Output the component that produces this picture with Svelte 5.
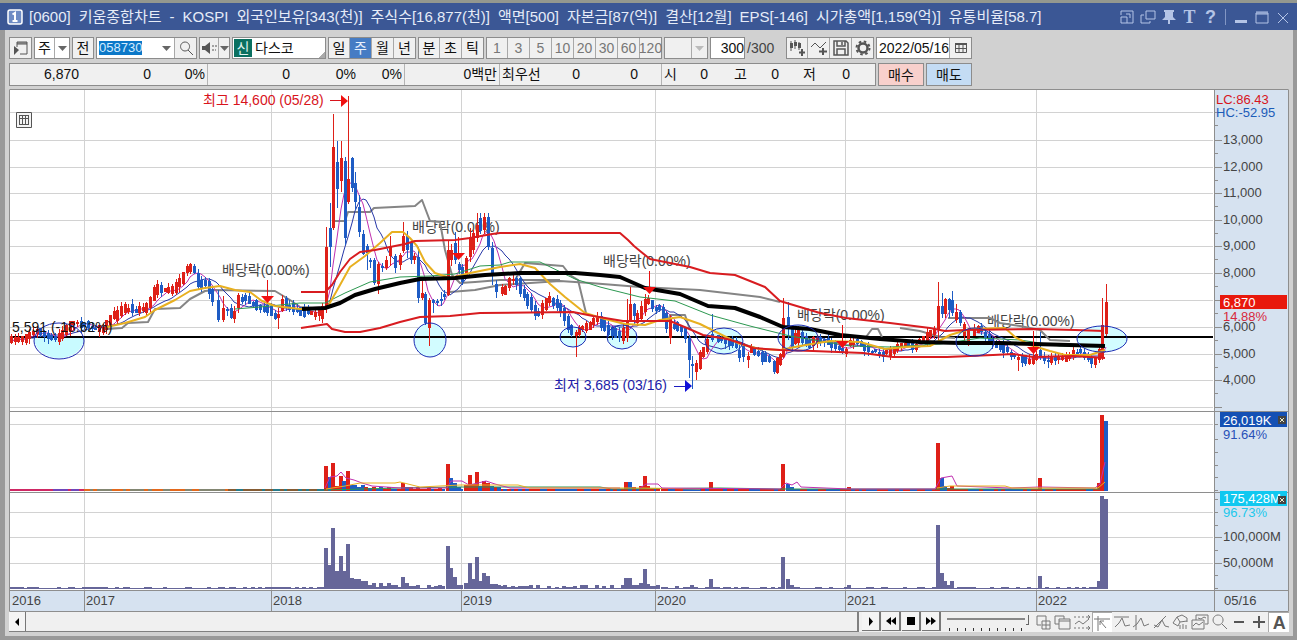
<script lang="ts">
  // Weekly stock chart window: title bar, period toolbar, quote strip,
  // three stacked panes (price / volume / turnover) and the replay bar.

  type Candle = { x: number; high: number; low: number; top: number; bottom: number; up: boolean };

  const title = [
    "[0600]",
    "키움종합차트",
    "-",
    "KOSPI",
    "외국인보유[343(천)]",
    "주식수[16,877(천)]",
    "액면[500]",
    "자본금[87(억)]",
    "결산[12월]",
    "EPS[-146]",
    "시가총액[1,159(억)]",
    "유통비율[58.7]",
  ];

  const periods = ["일", "주", "월", "년"];
  const intraday = ["분", "초", "틱"];
  const minutes = [1, 3, 5, 10, 20, 30, 60, 120];
  let period = $state("주");
  let code = $state("058730");
  let count = $state("300");
  let date = $state("2022/05/16");
  let speed = $state(100);

  const priceGrid = [112, 140, 167, 193, 220, 246, 273, 300, 327, 354, 380, 407];
  const priceLabels = ["13,000", "12,000", "11,000", "10,000", "9,000", "8,000", "7,000", "6,000", "5,000", "4,000"];
  const years = [
    { x: 10, label: "2016" },
    { x: 84, label: "2017" },
    { x: 271, label: "2018" },
    { x: 461, label: "2019" },
    { x: 655, label: "2020" },
    { x: 845, label: "2021" },
    { x: 1036, label: "2022" },
  ];

  // Middle of the weekly range in the quiet stretches, as x, y pairs.
  const mids = pairs(
    "11 341 16 339 25 338 30 334 40 331 50 338 57 339 65 332 72 323 80 323 88 326 95 328 103 329 107 325 111 318 118 314 125 309 131 309 138 310 146 308 152 301 156 288 162 291 170 292 177 287 183 277 189 267 195 272 200 283 207 283 213 296 218 308 222 312 228 310 234 314 239 298 247 299 254 303 262 308 270 309 277 318 283 302 290 307 297 309 303 311 310 313 316 314 322 311 326 300 495 290 502 292 506 290 510 281 517 281 521 290 527 299 533 307 538 313 543 309 547 301 555 301 560 308 565 317 569 326 573 336 580 329 587 328 592 323 598 317 603 325 610 330 616 333 622 336 627 325 637 319 643 308 648 300 655 308 661 308 665 318 669 325 674 326 680 329 686 334 702 352 705 350 709 338 718 338 725 340 731 342 737 345 745 355 752 350 758 354 765 358 770 361 774 366 780 360 797 335 802 335 808 343 815 340 822 340 830 344 838 348 845 352 851 343 855 342 862 345 868 350 875 351 882 353 890 353 897 347 905 345 915 347 922 340 928 334 935 332 956 312 960 319 964 331 968 338 972 335 976 328 982 331 988 337 994 343 1000 347 1007 351 1013 356 1022 358 1029 361 1036 357 1044 360 1055 358 1062 359 1070 356 1075 352 1080 352 1086 358 1094 361 1099 355 1106 318",
  );

  // Weeks that stand out: x, high, low, body top, body bottom, 1 = up.
  const marked: Candle[] = [
    [218, 290, 322, 300, 320, 0], [223, 296, 322, 308, 320, 1], [278, 308, 329, 314, 318, 1],
    [326, 227, 313, 247, 307, 1], [330, 203, 267, 228, 247, 0], [333, 114, 230, 147, 228, 1],
    [337, 141, 208, 162, 189, 0], [341, 141, 192, 158, 181, 1], [345, 157, 245, 161, 238, 0],
    [348, 96, 204, 179, 202, 1], [352, 157, 192, 158, 188, 0], [355, 172, 210, 183, 202, 0],
    [359, 195, 237, 207, 232, 0], [363, 230, 255, 234, 254, 0], [367, 244, 270, 246, 253, 0],
    [370, 258, 268, 260, 262, 0], [374, 258, 285, 260, 283, 0], [378, 262, 294, 264, 284, 1],
    [382, 263, 272, 266, 268, 0], [386, 256, 270, 260, 268, 1], [390, 236, 266, 246, 256, 1],
    [395, 254, 273, 256, 268, 0], [400, 253, 270, 255, 265, 1], [403, 222, 253, 236, 251, 1],
    [407, 231, 258, 236, 250, 0], [411, 240, 264, 242, 260, 0], [414, 253, 264, 256, 260, 1],
    [418, 247, 303, 257, 298, 0], [422, 281, 300, 293, 298, 1], [425, 292, 325, 294, 323, 0],
    [429, 298, 346, 300, 328, 1], [433, 299, 313, 300, 303, 0], [437, 299, 306, 301, 303, 0],
    [441, 292, 306, 299, 301, 0], [444, 290, 300, 294, 297, 0], [448, 240, 296, 250, 295, 1],
    [451, 244, 266, 250, 260, 1], [455, 232, 264, 243, 260, 0], [459, 262, 274, 264, 270, 0],
    [462, 264, 285, 267, 282, 0], [466, 256, 278, 258, 277, 1], [470, 228, 262, 237, 257, 1],
    [473, 230, 254, 233, 250, 1], [477, 213, 242, 225, 238, 1], [480, 213, 234, 218, 231, 0],
    [484, 213, 234, 217, 230, 1], [488, 213, 250, 217, 247, 0], [492, 242, 285, 248, 275, 0],
    [496, 280, 298, 284, 292, 0], [576, 330, 357, 332, 336, 1], [627, 299, 342, 322, 338, 1],
    [630, 287, 322, 304, 320, 1], [634, 303, 325, 304, 316, 0], [645, 294, 316, 299, 312, 1],
    [670, 315, 344, 318, 338, 1], [689, 335, 378, 338, 360, 0], [692, 356, 389, 364, 366, 0],
    [696, 360, 380, 363, 372, 1], [700, 350, 370, 352, 369, 1], [712, 314, 342, 334, 340, 0],
    [739, 345, 362, 350, 358, 0], [748, 352, 368, 356, 360, 1], [774, 360, 374, 361, 372, 0],
    [777, 357, 374, 358, 373, 1], [783, 298, 358, 318, 357, 1], [788, 302, 340, 317, 327, 0],
    [792, 326, 350, 328, 348, 0], [798, 326, 348, 328, 343, 1], [802, 330, 345, 332, 343, 0],
    [938, 282, 340, 306, 330, 1], [942, 293, 318, 306, 314, 0], [945, 298, 318, 299, 314, 1],
    [949, 298, 318, 299, 310, 0], [952, 291, 316, 300, 313, 0], [956, 304, 323, 312, 320, 1],
    [960, 310, 326, 312, 323, 0], [964, 322, 342, 324, 336, 1], [968, 328, 346, 331, 344, 1],
    [1018, 354, 371, 357, 360, 1], [1040, 332, 360, 350, 358, 0], [1048, 355, 368, 360, 362, 0],
    [1102, 298, 360, 325, 357, 1], [1106, 284, 336, 302, 334, 1],
  ].map(([x, high, low, top, bottom, up]) => ({ x, high, low, top, bottom, up: up === 1 }));

  function pairs(text: string): number[][] {
    const n = text.split(" ").map(Number);
    return n.flatMap((v, i) => (i % 2 ? [] : [[v, n[i + 1]]]));
  }

  function midAt(x: number): number {
    const i = mids.findIndex(([px]) => px >= x);
    if (i <= 0) return mids[i === 0 ? 0 : mids.length - 1][1];
    const [x0, y0] = mids[i - 1];
    const [x1, y1] = mids[i];
    return y0 + ((y1 - y0) * (x - x0)) / (x1 - x0);
  }

  // Small repeatable generator so the filler weeks never change.
  let seed = 7;
  function rand(): number {
    seed = (seed * 16807) % 2147483647;
    return seed / 2147483647;
  }

  const weeks = Array.from({ length: 300 }, (_, i) => Math.round(11 + i * 3.662));

  function near(x: number): Candle | undefined {
    return marked.find((c) => Math.abs(c.x - x) < 2.1);
  }

  const filler: Candle[] = weeks
    .filter((x) => !near(x) && !(x > 324 && x < 494))
    .map((x) => {
      const calm = x < 105 || x > 830;
      const slope = midAt(x + 3) - midAt(x - 3);
      const y = midAt(x) + (rand() - 0.5) * 3;
      const half = (calm ? 0.5 : 1) + rand() * 3 + Math.min(Math.abs(slope) / 3, 4);
      return {
        x,
        high: Math.round(y - half - rand() * 5),
        low: Math.round(y + half + rand() * 5),
        top: Math.round(y - half),
        bottom: Math.round(y + half),
        up: slope + (rand() - 0.5) * 4 < 0,
      };
    });
  const candles = [...filler, ...marked];

  function average(span: number): string {
    const ys = weeks.map((x) => {
      const c = near(x);
      return c ? (c.top + c.bottom) / 2 : midAt(x);
    });
    return weeks
      .map((x, i) => {
        const part = ys.slice(Math.max(0, i - span + 1), i + 1);
        return `${x},${Math.round(part.reduce((a, b) => a + b, 0) / part.length)}`;
      })
      .join(" ");
  }

  const backLines = [
    { cls: "gray", points: "107 329 122 328 128 323 148 322 155 309 180 308 190 299 205 291 215 290 275 291 290 300 300 307 325 309" },
    { cls: "gray", points: "335 221 345 221 348 212 370 212 374 208 415 206 422 200 430 221 440 222 445 250 452 275 460 283 475 282 500 280 560 280" },
    { cls: "gray", points: "450 292 475 290 500 285 560 281 590 283 640 287 700 290 760 297 780 302" },
    { cls: "gray", points: "515 280 525 263 563 266 570 275 578 280 586 313" },
    { cls: "gray", points: "668 322 670 315 685 315 690 330" },
    { cls: "gray", points: "866 337 872 329 878 329 882 337" },
    { cls: "gray", points: "900 328 920 331 940 337 955 338" },
    { cls: "gray", points: "948 318 990 318 1000 323 1020 326 1040 330 1050 340 1070 341" },
  ];
  const frontLines = [
    { cls: "green", points: "235 309 260 307 300 303 325 303 345 293 370 282 400 277 430 276 455 274 480 266 500 265 510 262 540 262 575 279 600 287 640 297 675 301 710 315 750 326 790 336 850 346 890 347 940 344 980 338 1020 340 1060 346 1105 346" },
    { cls: "gold", points: "107 327 125 323 145 317 155 310 175 300 190 291 205 288 220 286 235 290 250 292 262 301 275 306 300 309 327 308 340 285 350 267 365 256 380 243 392 232 403 232 410 238 417 246 425 262 435 273 450 278 470 273 500 267 520 264 535 268 550 284 565 297 585 313 605 319 625 324 645 325 660 320 680 317 700 324 720 334 740 344 760 349 780 350 800 346 830 341 860 342 885 349 905 347 930 346 950 335 970 329 1005 328 1015 337 1030 345 1050 351 1065 355 1090 355 1105 350" },
    { cls: "black", points: "302 309 325 308 340 303 355 295 375 289 400 283 420 279 455 278 485 275 520 273 575 273 600 275 620 277 645 288 680 294 708 306 735 308 760 317 783 327 810 329 840 335 880 339 920 342 960 343 1000 343 1105 346" },
    { cls: "red", points: "301 292 325 292 332 285 340 272 350 259 360 252 375 250 390 247 405 244 415 241 455 240 470 238 492 234 500 233 620 233 628 240 634 246 640 251 650 259 665 262 690 267 710 273 735 275 750 281 765 287 780 301 800 307 820 313 846 318 890 323 930 328 945 331 965 330 1035 329 1075 330 1104 331" },
    { cls: "red", points: "301 328 327 324 332 329 345 332 360 332 380 328 400 322 420 317 450 316 480 313 573 312 593 316 623 321 670 321 687 328 703 335 727 339 740 343 753 348 780 350 813 351 863 353 893 357 947 357 993 355 1013 354 1033 357 1073 356 1105 358" },
  ];

  const rings = [
    [430, 340, 16, 17], [573, 337, 13, 10], [622, 337, 15, 12], [724, 341, 19, 13],
    [798, 338, 20, 13], [975, 342, 19, 14], [1102, 339, 25, 13],
  ];

  const dividends = [
    { x: 222, y: 275, arrow: 267 },
    { x: 412, y: 232, arrow: 458 },
    { x: 603, y: 266, arrow: 649 },
    { x: 797, y: 320, arrow: 842 },
    { x: 987, y: 326, arrow: 1033 },
  ];

  // Busy weeks: x, turnover top, volume top, 1 = up.
  const busy = [
    [326, 548, 466, 1], [330, 565, 477, 0], [333, 528, 463, 1], [337, 571, 486, 1], [341, 556, 476, 1],
    [344, 571, 481, 0], [348, 544, 471, 1], [352, 578, 485, 0], [355, 579, 485, 0], [359, 579, 487, 0],
    [363, 581, 485, 0], [366, 581, 487, 1], [370, 585, 488, 0], [374, 583, 487, 1], [381, 583, 487, 0],
    [389, 583, 487, 1], [403, 577, 483, 1], [407, 583, 487, 0], [411, 586, 487, 1], [418, 585, 487, 1],
    [429, 585, 488, 1], [440, 585, 488, 1], [448, 546, 464, 1], [451, 568, 478, 0], [455, 577, 483, 0],
    [459, 585, 487, 0], [466, 583, 485, 1], [470, 563, 475, 1], [473, 579, 484, 1], [477, 557, 472, 1],
    [480, 581, 486, 0], [484, 573, 481, 1], [488, 576, 483, 1], [492, 584, 486, 0], [496, 584, 487, 1],
    [499, 585, 487, 0], [626, 578, 482, 1], [630, 578, 482, 0], [634, 585, 487, 1], [641, 583, 486, 1],
    [645, 569, 476, 1], [648, 584, 486, 1], [658, 585, 488, 1], [711, 579, 482, 1], [783, 557, 464, 1],
    [788, 579, 484, 0], [792, 585, 487, 0], [849, 585, 487, 1], [938, 525, 443, 1], [942, 573, 478, 0],
    [945, 581, 486, 0], [949, 585, 488, 1], [952, 581, 486, 1], [1040, 576, 478, 1], [1099, 581, 483, 1],
    [1102, 496, 415, 1], [1106, 499, 421, 0],
  ];
  const quiet = weeks
    .filter((x) => !busy.some((b) => Math.abs(b[0] - x) < 2))
    .map((x) => [x, 588 - Math.floor(rand() * (x > 325 && x < 700 ? 4 : 2)), 489, rand() > 0.5 ? 1 : 0]);
  const bars = [...quiet, ...busy];

  const volumeLines = [
    { cls: "magenta", points: "10 490 84 490" },
    { cls: "gold", points: "84 490 228 490" },
    { cls: "green", points: "228 490 325 490 400 488 460 487 600 487 612 489 720 488 780 489 930 489 1100 489" },
    { cls: "magenta", points: "325 488 330 477 337 476 341 472 346 478 354 480 362 483 372 486 400 488 447 488 451 481 462 481 469 485 478 483 486 481 495 484 510 488 620 488" },
    { cls: "gold", points: "326 489 345 486 360 483 395 483 400 482 408 484 420 487 460 485 518 485 530 488 640 488 700 489" },
    { cls: "magenta", points: "640 488 646 484 658 484 662 488 780 489 786 483 792 485 797 482 801 487 850 489 935 489 941 478 952 476 957 486 1010 488 1040 487 1095 488 1100 484 1105 462" },
    { cls: "gold", points: "937 488 950 486 1005 486 1012 488 1098 488 1105 482" },
  ];

  const tools = [
    { name: "십자선 추가", d: "M3 3h9v5M3 3v9h4M8 8h8v8H8zM12 8v8M8 12h8" },
    { name: "창 복사", d: "M2 3h9v3M2 3v8h4M6 6h11v10H6zM6 8h11" },
    { name: "구간 표시", d: "M1 4h2m2 0h2m2 0h2m2 0h4M1 15h2m2 0h2m2 0h2m2 0h4M2 11l4-3 4 3 6-5M15 2l2 2-2 2M15 13l2 2-2 2" },
    { name: "기준선", d: "M1 5h16M5 2v15M7 7l6 7M7 11V7h4" },
    { name: "수평선", d: "M1 4h15M2 14l4-4 3-5 3 8 5-1" },
    { name: "수직선", d: "M4 2v15M1 14l4-3 4-6 3 8 5-2" },
    { name: "추세선", d: "M2 15L14 3M2 12l4 2 4-7 3 6 4 1" },
    { name: "도형", d: "M6 4l5-2 5 3v4M6 4L2 10l5 3 2-4zM9 9l7-1M9 12v4M12 11v5M15 12v4" },
    { name: "차트 겹치기", d: "M5 7V2h12v9h-3M7 5l3 1 3-2 2 1M1 7h12v9H1zM2 13l3-3 3 2 4-3" },
    { name: "돋보기", d: "M7 2a5 5 0 1 0 .1 0M11 11l5 5" },
    { name: "축소", d: "M4 9h10" },
    { name: "확대", d: "M3 9h12M9 3v12" },
  ];
</script>

{#snippet caret()}
  <svg class="caret" viewBox="0 0 9 5" width="9" height="5" aria-hidden="true"><path d="M0 0h9L4.5 5z" /></svg>
{/snippet}

<main class="window">
  <header class="titlebar">
    <svg viewBox="0 0 16 16" width="16" height="16" aria-hidden="true">
      <rect x="1" y="1" width="14" height="14" rx="2" fill="#6f8cc4" stroke="#fff" stroke-width="1.5" />
      <path d="M5.5 5.5L8 3.8V12M5.5 12h5" fill="none" stroke="#fff" stroke-width="2" />
    </svg>
    <h1>
      {#each title as part}<span>{part}</span>{/each}
    </h1>
    <div class="window-actions">
      <button type="button" aria-label="화면 크기">
        <svg viewBox="0 0 16 16"><path d="M2 6V2h12v12H8M2 8h6v6H2zM7 5h4v4" /></svg>
      </button>
      <button type="button" aria-label="화면 복사">
        <svg viewBox="0 0 16 16"><path d="M6 2h9v8H6zM4 6H1v8h9v-2" /></svg>
      </button>
      <button type="button" aria-label="고정">
        <svg viewBox="0 0 16 16"><path class="solid" d="M3 1h10v2h-1v5l3 3H1l3-3V3H3zM7 11h2v4H7z" /></svg>
      </button>
      <button type="button" class="serif">T</button>
      <button type="button" class="mark">?</button>
      <i></i>
      <button type="button" aria-label="최소화">
        <svg viewBox="0 0 16 16"><path stroke-width="2" d="M2 13h12M2 12h12" /></svg>
      </button>
      <button type="button" aria-label="최대화">
        <svg viewBox="0 0 16 16"><path d="M2 4h12v10H2zM2 5h12M2 3h12" /></svg>
      </button>
      <button type="button" aria-label="닫기">
        <svg viewBox="0 0 16 16"><path d="M3 4l10 10M13 4L3 14" /></svg>
      </button>
    </div>
  </header>

  <div class="body">
    <div class="toolbar">
      <button type="button" class="box first" aria-label="메뉴 열기">
        <svg viewBox="0 0 18 18" width="18" height="18"><path d="M5 8V3h10v12H8M5 4h10M5 5h10" /><path class="solid" d="M2 7l5 4-5 5z" /></svg>
      </button>
      <div class="group white kind">
        <select aria-label="종목 구분"><option>주</option></select>
        {@render caret()}
      </div>
      <button type="button" class="box">전</button>
      <div class="group">
        <div class="code"><input aria-label="종목코드" bind:value={code} /></div>
        <button type="button" class="drop" aria-label="종목 목록">{@render caret()}</button>
        <button type="button" aria-label="종목 검색">
          <svg viewBox="0 0 18 18" width="18" height="18"><path d="M8 3a4.5 4.5 0 1 0 .1 0M11 11l5 5" /></svg>
        </button>
      </div>
      <div class="group sound">
        <button type="button" aria-label="소리">
          <svg viewBox="0 0 18 18" width="18" height="18"><path class="solid" d="M2 7h3l5-4v12l-5-4H2z" /><path stroke-dasharray="2 1" d="M12 7h5M12 11h4" /></svg>
        </button>
        <button type="button" aria-label="소리 목록">{@render caret()}</button>
      </div>
      <div class="stock"><b>신</b><span>다스코</span></div>
      <div class="group">
        {#each periods as p}
          <button type="button" class:active={p === period} onclick={() => (period = p)}>{p}</button>
        {/each}
      </div>
      <div class="group">
        {#each intraday as p}<button type="button">{p}</button>{/each}
      </div>
      <div class="group dim">
        {#each minutes as m}<button type="button">{m}</button>{/each}
      </div>
      <div class="group dim blank">
        <select aria-label="분 단위"><option></option></select>
        {@render caret()}
      </div>
      <input class="count" aria-label="봉 개수" bind:value={count} />
      <span class="total">/300</span>
      <div class="group">
        <button type="button" aria-label="봉 추가">
          <svg viewBox="0 0 18 18" width="18" height="18"><path d="M3 2v10M7 1v9M11 3v8" /><path class="solid" d="M2 4h3v5H2zM6 3h3v4H6zM10 4h3v5h-3z" /><path stroke-width="2" d="M14 10v7M11 13.5h6" /></svg>
        </button>
        <button type="button" aria-label="지표 추가">
          <svg viewBox="0 0 18 18" width="18" height="18"><path d="M1 8l4-4 5 5 6-6" /><path stroke-width="2" d="M13 9v7M9 12.5h8" /></svg>
        </button>
        <button type="button" aria-label="저장">
          <svg viewBox="0 0 18 18" width="18" height="18"><path stroke-width="1.5" d="M2 2h12l2 2v12H2zM5 2v5h8V2M5 16v-6h8v6M10 3v3" /></svg>
        </button>
        <button type="button" aria-label="설정">
          <svg viewBox="0 0 18 18" width="18" height="18"><circle cx="9" cy="9" r="4.5" stroke-width="2.5" /><circle cx="9" cy="9" r="6.5" stroke-width="2" stroke-dasharray="2.55 2.55" /></svg>
        </button>
      </div>
      <div class="group">
        <input class="date" aria-label="기준일" bind:value={date} />
        <button type="button" aria-label="달력">
          <svg viewBox="0 0 18 18" width="18" height="18"><path d="M3.5 4.5h11v9h-11zM7 6v7M11 6v7M4 9.5h10" /><path stroke-width="2" d="M3 5h12" /></svg>
        </button>
      </div>
    </div>

    <div class="quote-row">
      <div class="quote">
        <span>6,870</span><span>0</span><span class="end">0%</span>
        <span>0</span><span>0%</span><span class="end">0%</span>
        <span class="end">0백만</span>
        <span class="name">최우선</span><span>0</span><span>0</span><span class="end"></span>
        <span class="name">시</span><span>0</span>
        <span>고</span><span>0</span>
        <span>저</span><span>0</span>
      </div>
      <button type="button" class="buy">매수</button>
      <button type="button" class="sell">매도</button>
    </div>

    <div class="chart">
      <button type="button" class="grid-button" aria-label="표 보기">
        <svg viewBox="0 0 16 16" width="16" height="16"><path d="M.5.5h15v15H.5zM3.5 3v10M6.5 3v10M9.5 3v10M12.5 3v10M3 3.5h10M3 6.5h10M3 12.5h10" /></svg>
      </button>
      <svg class="plot" viewBox="9 89 1280 523" role="img" aria-label="다스코 주봉 차트">
        <rect x="9" y="89" width="1280" height="523" fill="#fff" />
        <rect x="1214" y="90" width="74" height="501" class="pale" />
        <rect x="10" y="591" width="1278" height="20" class="pale" />

        <g class="grid">
          {#each [...priceGrid, 424, 512, 537, 563] as y}<path d="M10 {y}.5H1213" />{/each}
          {#each years.slice(1) as { x }}<path d="M{x}.5 90V591" />{/each}
        </g>

        <path d="M34 338a25 20 0 0 0 50 0z" fill="#c9fbff" />
        {#each rings as [cx, cy, rx, ry]}<ellipse {cx} {cy} {rx} {ry} fill="#d2fcff" />{/each}
        <path d="M10 337H1213" stroke="#000" stroke-width="2" />

        {#each dividends as { x, y }}<text {x} {y} class="note">배당락(0.00%)</text>{/each}

        {#each backLines as { cls, points }}<polyline class={cls} {points} />{/each}
        <polyline class="blue" points={average(10)} />
        <polyline class="magenta" points={average(5)} />

        <g shape-rendering="crispEdges">
          {#each candles as c}
            <g class={c.up ? "up" : "down"}>
              <rect x={c.x} y={c.high} width="1" height={c.low - c.high} />
              <rect x={c.x - 1} y={c.top} width="3" height={Math.max(c.bottom - c.top, 2)} />
            </g>
          {/each}
        </g>
        {#each frontLines as { cls, points }}<polyline class={cls} {points} />{/each}

        <ellipse cx="59" cy="341" rx="25" ry="18" class="ring" />
        {#each rings as [cx, cy, rx, ry]}<ellipse {cx} {cy} {rx} {ry} class="ring" />{/each}

        {#each dividends as { arrow, y }}
          <path d="M{arrow}.5 {y + 5}v18" stroke="#e81010" />
          <path d="M{arrow - 6} {y + 21}h13l-6.5 7z" fill="#f01010" />
        {/each}
        <text x="12" y="332" fill="#111">5,591 (-18.62%)</text>
        <text x="203" y="105" fill="#d8141c">최고 14,600 (05/28)</text>
        <path d="M330 100.5h12" stroke="#d8141c" />
        <path d="M341 95v12l7-6z" fill="#f01010" />
        <text x="554" y="390" fill="#1c1ca8">최저 3,685 (03/16)</text>
        <path d="M674 386.5h12" stroke="#1c1cc0" />
        <path d="M685 380v12l7-6z" fill="#1010d8" />

        <g shape-rendering="crispEdges">
          {#each bars as [x, amount, volume, up]}
            <rect x={x - 2} y={volume} width="4" height={491 - volume} class={up ? "up" : "down"} />
            <rect x={x - 2} y={amount} width="4" height={589 - amount} fill="#666699" />
          {/each}
        </g>
        {#each volumeLines as { cls, points }}
          <polyline class="{cls} slim" {points} />
        {/each}

        <g class="frame">
          <path d="M9.5 89.5H1288.5V611.5H9.5zM1214.5 90V611M10 411.5H1288M10 492.5H1288M10 590.5H1288" />
          {#each years.slice(1) as { x }}<path d="M{x}.5 591V611" />{/each}
          {#each [...priceGrid, 537, 563] as y}<path d="M1215 {y}.5h7" />{/each}
          {#each priceGrid.slice(0, -1) as y}<path d="M1215 {y + 13}.5h3" />{/each}
          {#each [424, 439, 452, 465, 477, 490, 499, 512, 525, 550, 575, 588] as y}<path d="M1215 {y}.5h3" />{/each}
        </g>

        <g class="axis">
          {#each priceLabels as label, i}<text x="1223" y={priceGrid[i + 1] + 4}>{label}</text>{/each}
          <text x="1223" y="541">100,000M</text>
          <text x="1223" y="567">50,000M</text>
          <text x="1216" y="104" fill="#d8141c">LC:86.43</text>
          <text x="1216" y="117" fill="#1c5cb8">HC:-52.95</text>
          <rect x="1220" y="295" width="67" height="14" fill="#e8180c" />
          <text x="1223" y="307" fill="#fff">6,870</text>
          <text x="1223" y="321" fill="#d8283c">14.88%</text>
          <rect x="1220" y="412" width="67" height="15" fill="#1450b4" />
          <text x="1223" y="425" fill="#fff">26,019K</text>
          <text x="1223" y="439" fill="#2850b8">91.64%</text>
          <rect x="1220" y="491" width="67" height="15" fill="#10c8f0" />
          <text x="1223" y="503" fill="#fff">175,428M</text>
          <text x="1223" y="517" fill="#20c8ec">96.73%</text>
          {#each [416, 496] as y}
            <rect x="1278" {y} width="8" height="8" fill="#444" />
            <path d="M1280 {y + 2}l4 4m0-4l-4 4" stroke="#eec" />
          {/each}
        </g>
        <g class="dates">
          {#each years as { x, label }}<text x={x + 2} y="605">{label}</text>{/each}
          <text x="1224" y="605">05/16</text>
        </g>
      </svg>
    </div>

    <div class="bottom">
      <div class="scroll">
        <button type="button" class="raised" aria-label="이전">
          <svg viewBox="0 0 12 12" width="12" height="12"><path d="M8 2v8L4 6z" /></svg>
        </button>
      </div>
      <div class="replay">
        <button type="button" class="raised" aria-label="재생">
          <svg viewBox="0 0 12 12" width="12" height="12"><path d="M4 2v9l4-4.5z" /></svg>
        </button>
        <button type="button" class="raised" aria-label="뒤로">
          <svg viewBox="0 0 12 12" width="12" height="12"><path d="M6 2v8L1 6zM11 2v8L6 6z" /></svg>
        </button>
        <button type="button" class="raised" aria-label="정지">
          <svg viewBox="0 0 12 12" width="12" height="12"><path d="M2 2h8v8H2z" /></svg>
        </button>
        <button type="button" class="raised" aria-label="앞으로">
          <svg viewBox="0 0 12 12" width="12" height="12"><path d="M1 2v8l5-4zM6 2v8l5-4z" /></svg>
        </button>
      </div>
      <input class="speed" type="range" min="0" max="100" aria-label="재생 속도" bind:value={speed} />
      <div class="tools">
        {#each tools as tool, i}
          <button type="button" class:pressed={i === 3} class:bold={i > 9} aria-label={tool.name}>
            <svg viewBox="0 0 18 18" width="18" height="18"><path d={tool.d} /></svg>
          </button>
        {/each}
        <button type="button" class="pressed letter">A</button>
      </div>
    </div>
  </div>
</main>

<style>
  :global(body) {
    background: #999;
  }
  .window {
    border-top: 3px solid #94988f;
    background: #d1d1d1;
    font: 14px/20px "Liberation Sans", "Noto Sans CJK KR", sans-serif;
    color: #111;
  }
  button,
  input,
  select {
    box-sizing: border-box;
    margin: 0;
    padding: 0;
    border: 0;
    border-radius: 0;
    background: transparent;
    font: inherit;
    color: inherit;
    appearance: none;
    outline: none;
  }
  button {
    display: flex;
    align-items: center;
    justify-content: center;
  }
  svg {
    display: block;
    flex: none;
  }

  .titlebar {
    display: flex;
    align-items: center;
    height: 27px;
    padding: 0 4px 0 7px;
    background: #3b5795;
    color: #e6ecf8;
  }
  h1 {
    display: flex;
    flex: 1;
    gap: 8px;
    margin: 0 0 0 6px;
    font-size: 15px;
    font-weight: 400;
    white-space: nowrap;
  }
  .window-actions {
    display: flex;
    align-items: center;
    color: #b4c4e6;
  }
  .window-actions button {
    width: 21px;
    height: 20px;
  }
  .window-actions svg {
    width: 16px;
    height: 16px;
    fill: none;
    stroke: currentColor;
  }
  .window-actions .solid {
    fill: currentColor;
    stroke: none;
  }
  .window-actions i {
    width: 1px;
    height: 16px;
    margin: 0 4px;
    background: #8296c4;
  }
  .serif {
    font: 700 18px/20px "Liberation Serif", serif;
  }
  .mark {
    font-size: 18px;
    font-weight: 700;
  }

  .body {
    padding: 7px 4px 4px;
    border: solid #999;
    border-width: 0 4px 4px 5px;
  }
  .toolbar {
    display: flex;
    gap: 2px;
    height: 22px;
  }
  .toolbar > * {
    flex: none;
    box-sizing: border-box;
  }
  .toolbar svg {
    fill: none;
    stroke: #555;
  }
  .toolbar .solid {
    fill: #555;
    stroke: none;
  }
  .toolbar .caret {
    fill: #666;
    stroke: none;
  }
  .box,
  .group,
  .stock,
  .count {
    border: 1px solid #8c8c8c;
    background: #f0f0f0;
  }
  .box {
    width: 22px;
  }
  .first {
    width: 23px;
  }
  .group {
    display: flex;
    align-items: stretch;
  }
  .group button {
    width: 22px;
    border-right: 1px solid #a8a8a8;
  }
  .group button:first-child {
    width: 21px;
  }
  .group button:last-child {
    width: 21px;
    border-right: 0;
  }
  .group button.active {
    background: #467cc4;
    color: #e8f0fc;
  }
  .group.dim {
    color: #777;
  }
  .kind,
  .blank {
    align-items: center;
    gap: 3px;
    width: 36px;
  }
  .kind select,
  .blank select {
    width: 20px;
    height: 20px;
    padding-left: 3px;
    border-right: 1px solid #aaa;
  }
  .white {
    background: #fff;
  }
  .blank {
    width: 44px;
  }
  .blank select {
    width: 27px;
  }
  .toolbar .blank .caret {
    fill: #bbb;
  }
  .code {
    width: 61px;
    padding: 3px 2px;
    box-sizing: border-box;
    background: #fff;
  }
  .code input {
    display: block;
    width: 43px;
    height: 14px;
    background: #0c78c8;
    color: #d4ecff;
    font-size: 13px;
    line-height: 14px;
  }
  .group .drop {
    width: 17px;
    background: #fff;
  }
  .sound button:first-child {
    width: 19px;
  }
  .sound button:last-child {
    width: 10px;
  }
  .stock {
    display: flex;
    align-items: center;
    gap: 3px;
    width: 94px;
    padding: 1px;
    background: linear-gradient(135deg, #fff 94%, #aaa 94%);
  }
  .stock b {
    width: 18px;
    background: #0a7060;
    color: #e0f4f0;
    font-weight: 400;
    line-height: 18px;
    text-align: center;
  }
  .count {
    width: 35px;
    background: #fff;
    text-align: right;
  }
  .total {
    width: 37px;
    line-height: 22px;
    color: #444;
  }
  .date {
    width: 73px;
    padding-left: 2px;
    border-right: 1px solid #a8a8a8;
    background: #fff;
  }

  .quote-row {
    display: flex;
    gap: 2px;
    height: 23px;
    margin: 4px 0 3px;
  }
  .quote {
    display: grid;
    grid-template-columns: 69px 72px 57px 82px 66px 49px 95px 44px 36px 58px 24px 16px 30px 39px 32px 37px 34px;
    box-sizing: border-box;
    width: 867px;
    border: 1px solid #8c8c8c;
    background: #f0f0f0;
    line-height: 21px;
    text-align: right;
    white-space: nowrap;
  }
  .quote .end {
    padding-right: 2px;
    border-right: 1px solid #b4b4b4;
  }
  .quote .name {
    padding-left: 2px;
    text-align: left;
  }
  .buy,
  .sell {
    width: 46px;
    border: 1px solid #8c8c8c;
    background: #f8d0cc;
  }
  .sell {
    background: #c4dcf4;
  }

  .chart {
    position: relative;
  }
  .grid-button {
    position: absolute;
    top: 23px;
    left: 7px;
    background: #f4f4f4;
  }
  .grid-button path {
    fill: none;
    stroke: #555;
  }
  .plot {
    width: 100%;
    height: auto;
  }
  .plot text {
    white-space: pre;
  }
  .pale {
    fill: #d6e2f0;
  }
  .grid path {
    stroke: #d2d2d2;
  }
  .frame path {
    fill: none;
    stroke: #8e8e8e;
  }
  .note {
    fill: #444;
  }
  .axis text {
    font-size: 13px;
  }
  .axis text:not([fill]),
  .dates text {
    fill: #444;
  }
  .dates text {
    font-size: 13px;
  }
  .up {
    fill: #de2018;
  }
  .down {
    fill: #1e5cc4;
  }
  .ring {
    fill: none;
    stroke: #1c2cb4;
  }
  polyline {
    fill: none;
    stroke-width: 1;
    stroke-linejoin: round;
  }
  .gray {
    stroke: #858585;
    stroke-width: 2;
  }
  .green {
    stroke: #2c9850;
  }
  .gold {
    stroke: #e8b020;
    stroke-width: 2;
  }
  .black {
    stroke: #000;
    stroke-width: 4;
  }
  .red {
    stroke: #d81c20;
    stroke-width: 2;
  }
  .blue {
    stroke: #2838a8;
  }
  .magenta {
    stroke: #c030b0;
  }
  .slim {
    stroke-width: 1;
  }

  .bottom {
    display: flex;
    height: 20px;
    background: #f0f0f0;
  }
  .scroll {
    display: flex;
    flex: 1;
    box-sizing: border-box;
    border: solid #808080;
    border-width: 0 2px 1px 0;
  }
  .raised {
    width: 19px;
    height: 19px;
    box-sizing: border-box;
    border: solid #777;
    border-width: 0 2px 1px 0;
    background: #f4f4f4;
  }
  .scroll .raised {
    width: 17px;
    border-width: 0 1px 0 0;
  }
  .replay {
    display: flex;
    gap: 1px;
    margin: 0 6px 0 3px;
  }
  .speed {
    width: 82px;
    height: 20px;
    background:
      linear-gradient(#888, #888) 0 6px / 78px 2px no-repeat,
      repeating-linear-gradient(90deg, transparent 0 2px, #333 2px 3px, transparent 3px 8px) 0 16px / 100% 3px no-repeat;
  }
  .speed::-webkit-slider-thumb {
    width: 3px;
    height: 10px;
    margin-bottom: 4px;
    border: solid #666;
    border-width: 0 1px 1px 0;
    appearance: none;
  }
  .tools {
    display: flex;
    width: 256px;
    margin-left: 4px;
  }
  .tools button {
    flex: 1;
  }
  .tools path {
    fill: none;
    stroke: #777;
  }
  .tools .bold path {
    stroke: #555;
    stroke-width: 2;
  }
  .tools .pressed {
    border: solid #aaa;
    border-width: 1px 0 0 1px;
    background: #fff;
  }
  .tools .letter {
    color: #555;
    font-size: 18px;
    font-weight: 700;
  }
</style>
